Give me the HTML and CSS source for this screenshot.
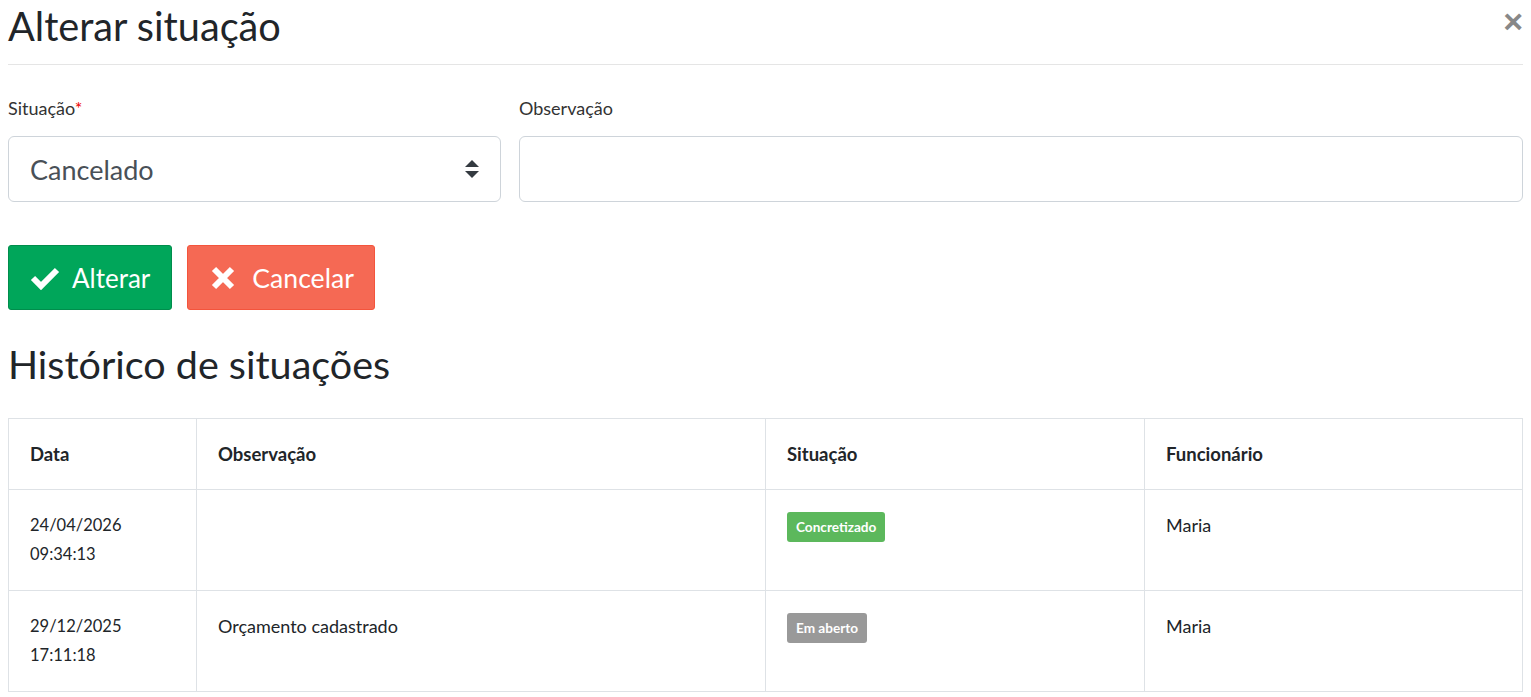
FILE: index.html
```html
<!DOCTYPE html>
<html lang="pt-BR">
<head>
    <meta charset="UTF-8">
    <meta name="viewport" content="width=device-width, initial-scale=1.0">
    <title>Alterar situação</title>
    <link rel="stylesheet" href="styles.css">
</head>
<body>
    <div class="modal">
        <div class="modal-header">
            <h1 class="modal-title">Alterar situação</h1>
            <button class="close" type="button" aria-label="Fechar">&times;</button>
        </div>

        <form class="form-row">
            <div class="field">
                <label>Situação<span class="req">*</span></label>
                <div class="select-box">
                    <span class="select-value">Cancelado</span>
                    <svg class="select-arrows" width="14" height="18" viewBox="0 0 14 18">
                        <path d="M7 0 L14 7 L0 7 Z" fill="#343a40"/>
                        <path d="M0 11 L14 11 L7 18 Z" fill="#343a40"/>
                    </svg>
                </div>
            </div>
            <div class="field">
                <label>Observação</label>
                <div class="input-box"></div>
            </div>
        </form>

        <div class="actions">
            <button class="btn btn-success" type="button">
                <svg width="30" height="24" viewBox="0 0 30 24">
                    <path d="M3 12 L11 20 L27 4" fill="none" stroke="#fff" stroke-width="6"/>
                </svg>
                Alterar
            </button>
            <button class="btn btn-danger" type="button">
                <svg width="24" height="24" viewBox="0 0 24 24">
                    <path d="M3 3 L21 21 M21 3 L3 21" fill="none" stroke="#fff" stroke-width="6"/>
                </svg>
                Cancelar
            </button>
        </div>

        <h2 class="section-title">Histórico de situações</h2>

        <table class="history">
            <thead>
                <tr>
                    <th class="col-date">Data</th>
                    <th class="col-obs">Observação</th>
                    <th class="col-status">Situação</th>
                    <th>Funcionário</th>
                </tr>
            </thead>
            <tbody>
                <tr>
                    <td class="date">24/04/2026<br>09:34:13</td>
                    <td></td>
                    <td><span class="badge badge-green">Concretizado</span></td>
                    <td>Maria</td>
                </tr>
                <tr>
                    <td class="date">29/12/2025<br>17:11:18</td>
                    <td>Orçamento cadastrado</td>
                    <td><span class="badge badge-gray">Em aberto</span></td>
                    <td>Maria</td>
                </tr>
            </tbody>
        </table>
    </div>
</body>
</html>
```

FILE: styles.css
```css
body {
    margin: 0;
    font-family: Lato, "Open Sans", sans-serif;
    color: #212529;
    background: #fff;
}
.modal {
    padding: 0 8px;
}
.modal-header {
    display: flex;
    justify-content: space-between;
    align-items: flex-start;
    border-bottom: 1px solid #e5e5e5;
    height: 64px;
}
.modal-title {
    margin: 0;
    padding-top: 2px;
    font-size: 39.7px;
    font-weight: 400;
    line-height: 48px;
    color: #212529;
}
.close {
    margin-top: 4px;
    border: none;
    background: none;
    padding: 0;
    font-size: 34px;
    font-weight: 700;
    line-height: 34px;
    color: #888;
    cursor: pointer;
}
.form-row {
    display: grid;
    grid-template-columns: 493px 1fr;
    gap: 18px;
    margin-top: 32px;
}
.field label {
    display: block;
    font-size: 18px;
    line-height: 22px;
    color: #333;
    margin-bottom: 17px;
}
.req {
    color: #e00;
}
.select-box,
.input-box {
    height: 66px;
    border: 1px solid #ced4da;
    border-radius: 6px;
    box-sizing: border-box;
}
.select-box {
    display: flex;
    align-items: center;
    justify-content: space-between;
    padding: 0 21px;
}
.select-value {
    font-size: 27px;
    color: #495057;
}
.actions {
    display: flex;
    gap: 15px;
    margin-top: 43px;
}
.btn {
    display: flex;
    align-items: center;
    gap: 12px;
    height: 65px;
    padding: 0 21px;
    border: 1px solid transparent;
    border-radius: 3px;
    font-family: inherit;
    font-size: 26px;
    color: #fff;
    cursor: pointer;
}
.btn-success {
    background: #00a65a;
    border-color: #008d4c;
}
.btn-danger {
    gap: 17px;
    padding: 0 20px 0 23px;
    font-size: 26.6px;
    background: #f56954;
    border-color: #f4543c;
}
.section-title {
    margin: 28px 0 0;
    font-size: 39.5px;
    font-weight: 400;
    line-height: 52px;
}
.history {
    width: 100%;
    margin-top: 28px;
    border-collapse: collapse;
    font-size: 18px;
}
.history th,
.history td {
    border: 1px solid #dee2e6;
    padding: 21px;
    text-align: left;
    vertical-align: top;
    line-height: 29px;
}
.history th {
    font-weight: 700;
    font-size: 18.5px;
    line-height: 28px;
}
.history .date {
    font-size: 16.5px;
}
.col-date {
    width: 145px;
}
.col-obs {
    width: 526px;
}
.col-status {
    width: 336px;
}
.badge {
    display: inline-block;
    padding: 0 9px;
    border-radius: 3px;
    font-size: 13.6px;
    font-weight: 700;
    line-height: 30px;
    color: #fff;
}
.badge-green {
    background: #5cb85c;
}
.badge-gray {
    background: #999;
}
```
